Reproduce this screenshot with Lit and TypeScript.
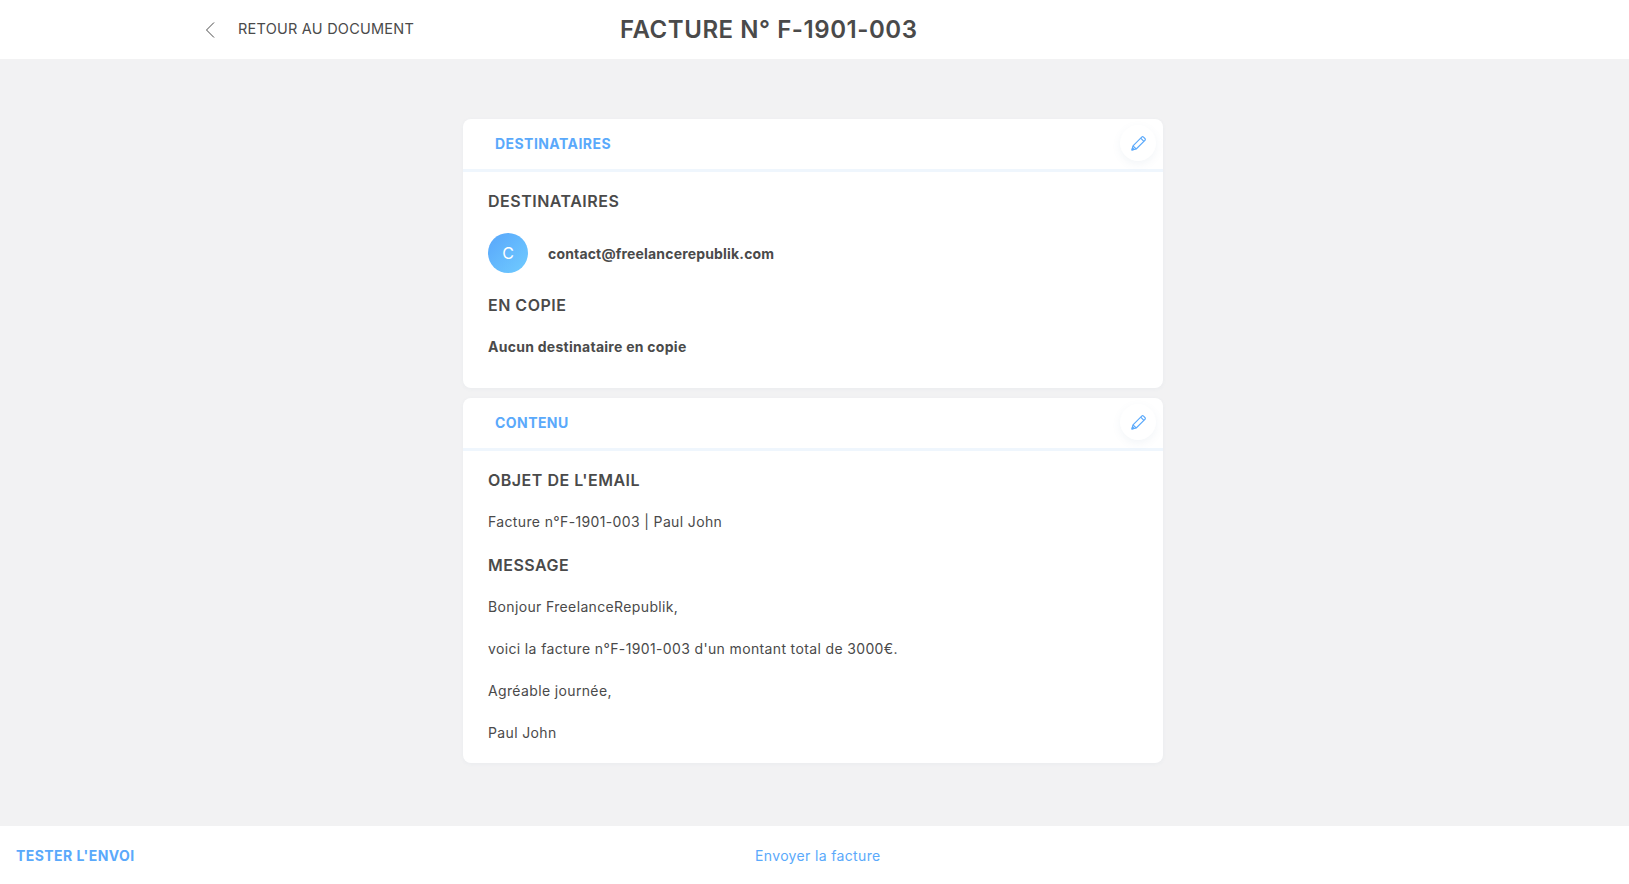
import { LitElement, html, css } from "lit";
import { customElement } from "lit/decorators.js";

const pencil = html`<svg width="15" height="15" viewBox="0 0 15 15" fill="none" stroke="#5aa9fb" stroke-width="1.15" stroke-linejoin="round"><path d="M1 14l1-4.200L10.700 1.100a1.300 1.300 0 0 1 1.800 0l1.400 1.400a1.300 1.300 0 0 1 0 1.800L5.200 13z"/><path d="M2 9.800l3.200 3.200M9.700 2.100l3.200 3.200"/><path d="M1 14l.5-2.200 1.700 1.700z" fill="#5aa9fb"/></svg>`;

@customElement("app-root")
export class AppRoot extends LitElement {
  static styles = css`
    :host { display: flex; flex-direction: column; height: 884px; background: #f2f2f3; font-family: Inter, "Liberation Sans", sans-serif; color: #4a4a4a; }
    .top { height: 59px; flex: none; background: #fff; display: flex; align-items: center; }
    .back { display: flex; align-items: center; margin-left: 205px; width: 415px; font-size: 14.5px; color: #4a4a4a; letter-spacing: 0.23px; gap: 23px; }
    .back span { position: relative; top: -1px; }
    h1 { margin: 0; font-size: 24px; font-weight: 600; color: #4a4a4a; letter-spacing: 0.55px; }
    main { flex: 1; display: flex; flex-direction: column; align-items: center; padding: 60px 3px 0 0; gap: 10px; }
    .card { width: 700px; background: #fff; border-radius: 8px; box-shadow: 0 1px 4px rgba(80,120,160,.05); }
    .head { height: 50px; display: flex; align-items: center; justify-content: space-between; padding: 0 7px 0 32px; border-bottom: 3px solid #eff6fd; border-radius: 8px 8px 0 0; }
    .head span { color: #5aa9fb; font-size: 14px; font-weight: 700; letter-spacing: 0.44px; position: relative; top: -1px; }
    .edit { width: 36px; height: 36px; border-radius: 50%; background: #fff; box-shadow: 0 3px 8px rgba(90,130,170,.08); display: flex; align-items: center; justify-content: center; position: relative; top: -1px; }
    .body { padding: 19px 25px 0; }
    h2 { margin: 0; font-size: 16px; font-weight: 600; color: #4a4a4a; line-height: 20px; letter-spacing: 0.5px; }
    .rec { display: flex; align-items: center; margin: 22px 0 22px; gap: 20px; }
    .avatar { width: 40px; height: 40px; border-radius: 50%; background: linear-gradient(135deg, #58a6fb, #70ccff); color: #fff; display: flex; align-items: center; justify-content: center; font-size: 16px; }
    b { font-size: 14px; font-weight: 700; color: #4a4a4a; letter-spacing: 0.17px; }
    p { margin: 0; font-size: 14px; line-height: 20px; color: #4a4a4a; letter-spacing: 0.36px; }
    .none { margin-top: 22px; padding-bottom: 31px; }
    .none b { display: block; line-height: 20px; letter-spacing: 0.27px; }
    .gap { margin-top: 22px; }
    h2.gap { margin-top: 23px; }
    .msg { padding-bottom: 20px; }
    footer { height: 58px; flex: none; background: #fff; display: flex; align-items: center; }
    .test { margin-left: 16px; color: #5aa9fb; font-size: 14px; font-weight: 700; width: 739px; letter-spacing: 0.44px; }
    .send { color: #5aa9fb; font-size: 14px; letter-spacing: 0.35px; }
  `;

  render() {
    return html`
      <header class="top">
        <div class="back">
          <svg width="10" height="16" viewBox="0 0 10 16" fill="none" stroke="#4a4a4a" stroke-width="1"><path d="M9 .5L1.500 8 9 15.500"/></svg>
          <span>RETOUR AU DOCUMENT</span>
        </div>
        <h1>FACTURE N° F-1901-003</h1>
      </header>
      <main>
        <section class="card">
          <div class="head"><span>DESTINATAIRES</span><div class="edit">${pencil}</div></div>
          <div class="body">
            <h2>DESTINATAIRES</h2>
            <div class="rec"><div class="avatar">C</div><b>contact@freelancerepublik.com</b></div>
            <h2>EN COPIE</h2>
            <div class="none"><b>Aucun destinataire en copie</b></div>
          </div>
        </section>
        <section class="card">
          <div class="head"><span>CONTENU</span><div class="edit">${pencil}</div></div>
          <div class="body msg">
            <h2>OBJET DE L'EMAIL</h2>
            <p class="gap">Facture n°F-1901-003 | Paul John</p>
            <h2 class="gap">MESSAGE</h2>
            <p class="gap">Bonjour FreelanceRepublik,</p>
            <p class="gap">voici la facture n°F-1901-003 d'un montant total de 3000€.</p>
            <p class="gap">Agréable journée,</p>
            <p class="gap">Paul John</p>
          </div>
        </section>
      </main>
      <footer>
        <div class="test">TESTER L'ENVOI</div>
        <div class="send">Envoyer la facture</div>
      </footer>
    `;
  }
}
